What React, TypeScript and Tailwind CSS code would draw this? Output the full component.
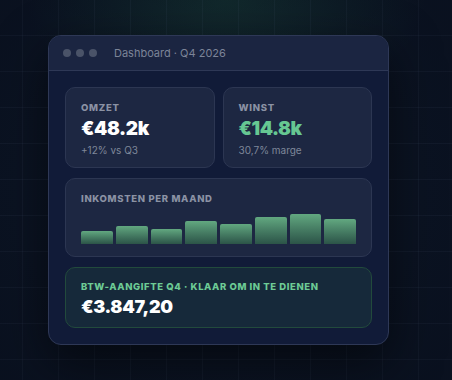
const bars = [13, 18, 15, 23, 20, 27, 30, 25]

const StatCard = ({
  label,
  value,
  note,
  valueClass,
}: {
  label: string
  value: string
  note: string
  valueClass: string
}) => (
  <div className="flex h-[81px] flex-col rounded-[10px] border border-[#2c3652] bg-[#1d2742] px-[15px] pt-[13px]">
    <p className="text-[9.5px]/[14px] font-extrabold tracking-[0.08em] text-[#8b92a4]">{label}</p>
    <p className={`mt-[2px] text-[19px]/[24px] font-black tracking-[-0.02em] ${valueClass}`}>{value}</p>
    <p className="mt-[3px] text-[10px]/[13px] text-[#7f879a]">{note}</p>
  </div>
)

export default function App() {
  return (
    <div
      className="relative h-[380px] w-[452px] overflow-hidden bg-[#0d1728] pl-[48px] pt-[35px]"
      style={{ fontFamily: 'Inter, "Noto Sans", sans-serif' }}
    >
      <div className="pointer-events-none absolute inset-0 bg-[radial-gradient(ellipse_200px_110px_at_226px_0px,rgba(40,110,80,0.35),transparent)]" />
      <div className="pointer-events-none absolute inset-0 bg-[linear-gradient(to_right,rgba(120,140,180,0.09)_1px,transparent_1px),linear-gradient(to_bottom,rgba(120,140,180,0.09)_1px,transparent_1px)] bg-[length:36px_36px] bg-[position:22px_35px]" />
      <div className="pointer-events-none absolute inset-0 bg-[radial-gradient(ellipse_300px_260px_at_220px_190px,transparent,rgba(5,8,18,0.4))]" />

      <div className="relative w-[341px] overflow-hidden rounded-[13px] border border-[#2e3856] bg-[#111b38] shadow-[0_18px_50px_rgba(0,0,0,0.55)]">
        <div className="flex h-[35px] items-center border-b border-[#2e3856] bg-[#1b2541] pl-[14px]">
          <div className="flex gap-[5px]">
            <span className="size-[8px] rounded-full bg-[#4a5368]" />
            <span className="size-[8px] rounded-full bg-[#4a5368]" />
            <span className="size-[8px] rounded-full bg-[#4a5368]" />
          </div>
          <p className="ml-[17px] text-[11px] text-[#7c8498]">Dashboard · Q4 2026</p>
        </div>

        <div className="flex flex-col gap-[10px] px-[16px] pb-[16px] pt-[16px]">
          <div className="grid grid-cols-2 gap-[8px]">
            <StatCard label="OMZET" value="€48.2k" note="+12% vs Q3" valueClass="text-white" />
            <StatCard label="WINST" value="€14.8k" note="30,7% marge" valueClass="text-[#66c792]" />
          </div>

          <div className="flex h-[79px] flex-col rounded-[10px] border border-[#2c3652] bg-[#1d2742] px-[15px] pb-[12px] pt-[13px]">
            <p className="text-[9.5px]/[14px] font-extrabold tracking-[0.07em] text-[#8b92a4]">INKOMSTEN PER MAAND</p>
            <div className="mt-auto flex h-[30px] items-end gap-[3px]">
              {bars.map((h, i) => (
                <div
                  key={i}
                  className="flex-1 rounded-t-[2px] bg-gradient-to-b from-[#62a880] to-[#2c5448]"
                  style={{ height: h }}
                />
              ))}
            </div>
          </div>

          <div className="flex h-[61px] flex-col rounded-[10px] border border-[#224a3c] bg-[#16293a] px-[15px] pt-[12px]">
            <p className="text-[9.5px]/[14px] font-extrabold tracking-[0.06em] text-[#6dcb95]">
              BTW-AANGIFTE Q4 · KLAAR OM IN TE DIENEN
            </p>
            <p className="mt-[2px] text-[18px]/[22px] font-black tracking-[-0.02em] text-white">€3.847,20</p>
          </div>
        </div>
      </div>
    </div>
  )
}
